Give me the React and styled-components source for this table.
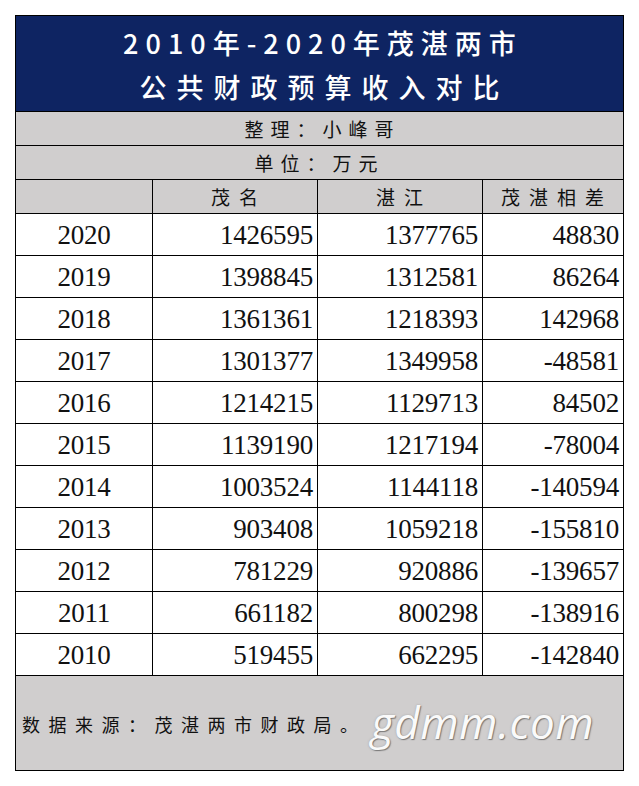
import React from 'react';
import styled, { createGlobalStyle } from 'styled-components';

const GlobalStyle = createGlobalStyle`
  html, body {
    margin: 0;
    padding: 0;
    background: #ffffff;
  }
  body {
    padding: 15px 0 0 15px;
  }
`;

const rows = [
  ['2020', '1426595', '1377765', '48830'],
  ['2019', '1398845', '1312581', '86264'],
  ['2018', '1361361', '1218393', '142968'],
  ['2017', '1301377', '1349958', '-48581'],
  ['2016', '1214215', '1129713', '84502'],
  ['2015', '1139190', '1217194', '-78004'],
  ['2014', '1003524', '1144118', '-140594'],
  ['2013', '903408', '1059218', '-155810'],
  ['2012', '781229', '920886', '-139657'],
  ['2011', '661182', '800298', '-138916'],
  ['2010', '519455', '662295', '-142840'],
];

const cjk = `"Noto Sans CJK SC", "Noto Sans", sans-serif`;

const Sheet = styled.div`
  position: relative;
  width: 607px;
  display: grid;
  grid-template-columns: 136px 164px 164px 140px;
  grid-template-rows: 95px 33px 33px 33px repeat(11, 41px) 94px;
  gap: 1px;
  background: #000;
  border: 1px solid #000;
`;

const TitleCell = styled.div`
  grid-column: 1 / -1;
  background: #0e2462;
  color: #fff;
  font-family: ${cjk};
  font-size: 27px;
  font-weight: 500;
  line-height: 44px;
  display: flex;
  flex-direction: column;
  align-items: center;
  justify-content: center;
  padding-top: 2px;
`;

const TitleLine = styled.span`
  letter-spacing: ${p => p.$spacing}px;
  padding-left: ${p => p.$spacing}px;
`;

const InfoCell = styled.div`
  grid-column: 1 / -1;
  background: #d0cece;
  font-family: ${cjk};
  font-size: 19px;
  letter-spacing: 7px;
  color: #111;
  display: flex;
  align-items: center;
  justify-content: center;
  padding-left: ${p => p.$shift || 0}px;
`;

const HeadCell = styled.div`
  background: #d0cece;
  font-family: ${cjk};
  font-size: 19px;
  letter-spacing: 9px;
  color: #111;
  display: flex;
  align-items: center;
  justify-content: center;
  padding-left: 8px;
`;

const DataCell = styled.div`
  background: #fff;
  font-family: "Liberation Serif", "Times New Roman", serif;
  font-size: 27px;
  color: #111;
  display: flex;
  align-items: center;
  justify-content: ${p => (p.$year ? 'center' : 'flex-end')};
  padding: 2px ${p => (p.$year ? 0 : 4)}px 0 0;
  letter-spacing: -0.2px;
`;

const Footer = styled.div`
  grid-column: 1 / -1;
  background: #d0cece;
  font-family: ${cjk};
  font-size: 18px;
  letter-spacing: 8.5px;
  color: #111;
  display: flex;
  align-items: center;
  padding-left: 6px;
  padding-top: 2px;
`;

const Watermark = styled.div`
  position: absolute;
  left: 355px;
  bottom: 18px;
  font-family: "Open Sans", "Noto Sans", sans-serif;
  font-style: italic;
  font-weight: 400;
  font-size: 44px;
  color: #fafafa;
  letter-spacing: 0.5px;
  text-shadow: 1px 1px 1px rgba(90, 90, 90, 0.7), 0 0 2px rgba(120, 120, 120, 0.5);
`;

export default function App() {
  return (
    <>
      <GlobalStyle />
      <Sheet>
        <TitleCell>
          <TitleLine $spacing={7}>2010年-2020年茂湛两市</TitleLine>
          <TitleLine $spacing={10}>公共财政预算收入对比</TitleLine>
        </TitleCell>
        <InfoCell $shift={6}>整理：小峰哥</InfoCell>
        <InfoCell>单位：万元</InfoCell>
        <HeadCell />
        <HeadCell>茂名</HeadCell>
        <HeadCell>湛江</HeadCell>
        <HeadCell>茂湛相差</HeadCell>
        {rows.map(r => (
          <React.Fragment key={r[0]}>
            <DataCell $year>{r[0]}</DataCell>
            <DataCell>{r[1]}</DataCell>
            <DataCell>{r[2]}</DataCell>
            <DataCell>{r[3]}</DataCell>
          </React.Fragment>
        ))}
        <Footer>数据来源：茂湛两市财政局。</Footer>
        <Watermark>gdmm.com</Watermark>
      </Sheet>
    </>
  );
}
